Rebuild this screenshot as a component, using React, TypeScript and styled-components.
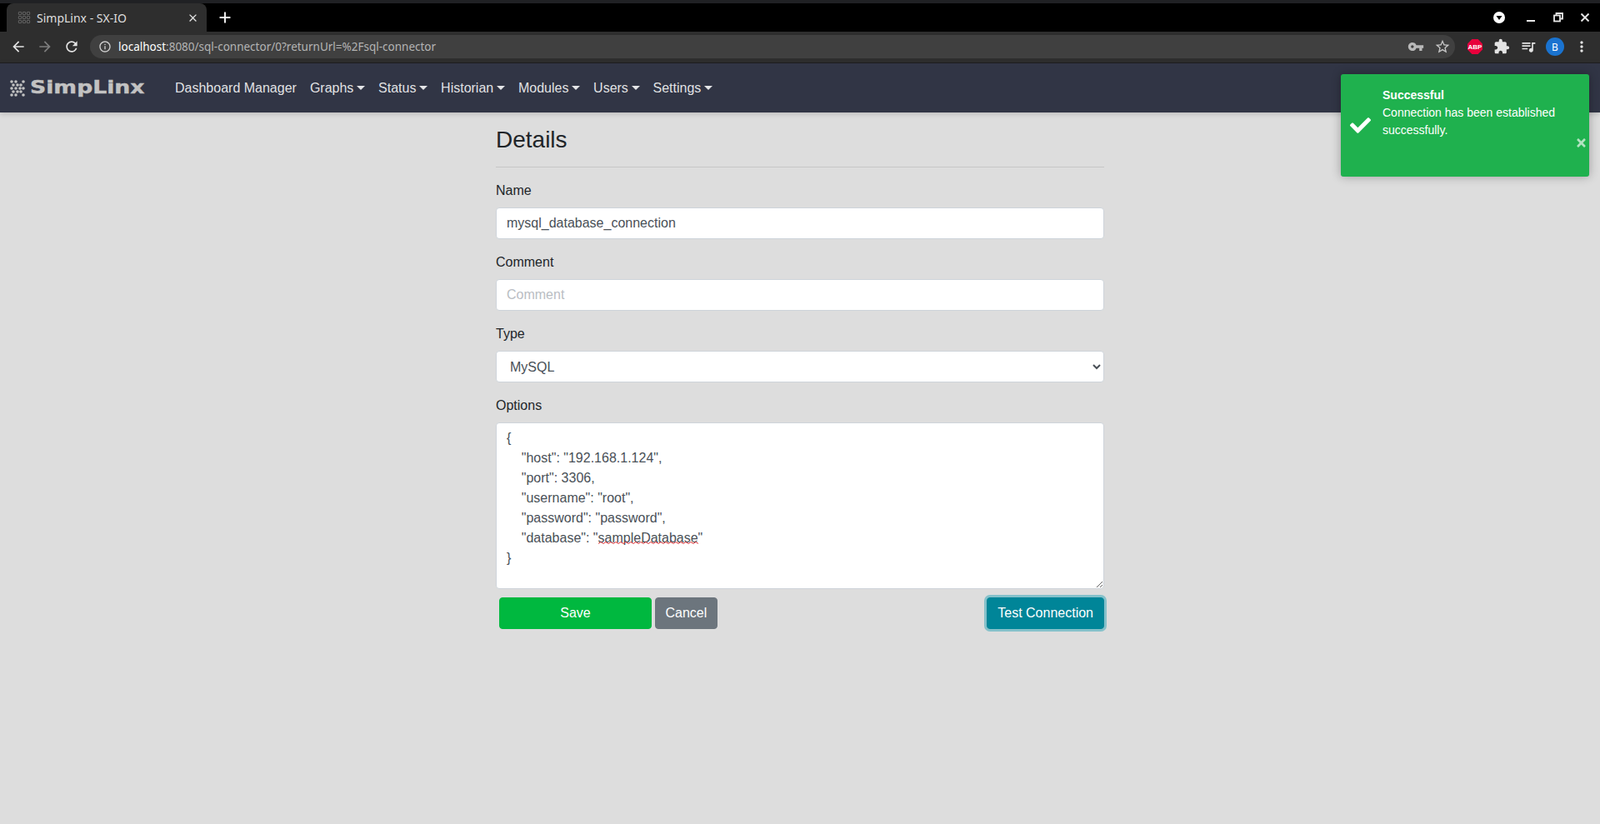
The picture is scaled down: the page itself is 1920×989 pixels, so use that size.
import React from 'react';
import styled, { createGlobalStyle } from 'styled-components';
import { FaCheck, FaTimes } from 'react-icons/fa';
import { MdArrowBack, MdArrowForward, MdRefresh, MdInfoOutline, MdVpnKey, MdStarBorder, MdExtension, MdQueueMusic, MdMoreVert, MdClose, MdAdd } from 'react-icons/md';

const GlobalStyle = createGlobalStyle`
    html, body {
        margin: 0;
        height: 100%;
        overflow: hidden;
        background: #dddddd;
        font-family: "Liberation Sans", Arial, sans-serif;
    }
    * {
        box-sizing: border-box;
    }
`;

const Page = styled.div`
    position: relative;
    height: 989px;
    display: flex;
    flex-direction: column;
    background: #dddddd;
`;

/* browser chrome */
const TabStrip = styled.div`
    height: 38px;
    border-top: 4px solid #202124;
    background: #000000;
    display: flex;
    align-items: flex-end;
    padding-left: 8px;
`;

const Tab = styled.div`
    width: 240px;
    height: 34px;
    background: #2e2e2e;
    border-radius: 8px 8px 0 0;
    display: flex;
    align-items: center;
    padding: 0 9px 0 13px;
    color: #dedede;
    font: 14px "Noto Sans", sans-serif;
`;

const TabTitle = styled.span`
    flex: 1;
    margin-left: 7px;
`;

const NewTab = styled.div`
    width: 44px;
    height: 34px;
    display: flex;
    align-items: center;
    justify-content: center;
    color: #ffffff;
    font-size: 22px;
`;

const WindowControls = styled.div`
    margin-left: auto;
    height: 34px;
    display: flex;
    align-items: center;
    padding-right: 2px;
`;

const WindowButton = styled.div`
    width: 32px;
    height: 34px;
    display: flex;
    align-items: center;
    justify-content: center;
`;

const ProfileMenu = styled(WindowButton)`
    margin-right: 6px;
`;

const MinimizeButton = styled(WindowButton)`
    margin-right: 1px;
`;

const Toolbar = styled.div`
    height: 37px;
    background: #2e2e2e;
    display: flex;
    align-items: center;
    padding: 0 6px 1px;
`;

const ToolButton = styled.div<{ $dim?: boolean }>`
    width: 32px;
    height: 32px;
    flex: none;
    display: flex;
    align-items: center;
    justify-content: center;
    color: ${p => (p.$dim ? '#7d7d7d' : '#e3e3e3')};
    font-size: 20px;
`;

const UrlBar = styled.div`
    flex: 1;
    height: 28px;
    margin: 0 8px 0 6px;
    border-radius: 14px;
    background: #404040;
    display: flex;
    align-items: center;
    padding: 0 0 0 10px;
    font: 13.5px "Noto Sans", sans-serif;
    color: #b4b4b4;
`;

const InfoIcon = styled.span`
    display: flex;
    color: #cfcfcf;
    font-size: 16px;
    margin-right: 8px;
`;

const Host = styled.span`
    color: #ffffff;
`;

const UrlIcons = styled.div`
    margin-left: auto;
    margin-right: -1px;
    display: flex;
    color: #b9b9b9;
    font-size: 20px;
`;

const Abp = styled.div`
    width: 18px;
    height: 18px;
    background: #e8003c;
    clip-path: polygon(30% 0, 70% 0, 100% 30%, 100% 70%, 70% 100%, 30% 100%, 0 70%, 0 30%);
    color: #ffffff;
    font: bold 8px "Liberation Sans", sans-serif;
    display: flex;
    align-items: center;
    justify-content: center;
`;

const Avatar = styled.div`
    width: 22px;
    height: 22px;
    border-radius: 50%;
    background: #1a73d0;
    color: #ffffff;
    font: 12px "Noto Sans", sans-serif;
    display: flex;
    align-items: center;
    justify-content: center;
`;

/* app navbar */
const Navbar = styled.nav`
    height: 60px;
    border-top: 1px solid #1d1d1f;
    background: #313545;
    box-shadow: 0 2px 6px rgba(0, 0, 0, 0.15);
    display: flex;
    align-items: center;
    padding-left: 12px;
`;

const Brand = styled.div`
    width: 190px;
    display: flex;
    align-items: center;
    gap: 5px;
`;

const BrandName = styled.span`
    display: inline-block;
    font: bold 21px "DejaVu Sans", sans-serif;
    color: #c2c2c2;
    line-height: 1;
    -webkit-text-stroke: 0.4px #c2c2c2;
    transform: scaleX(1.27);
    transform-origin: left center;
`;

const NavItem = styled.a<{ $caret?: boolean }>`
    padding: 8px;
    font-size: 16px;
    line-height: 24px;
    color: rgba(255, 255, 255, 0.87);
    white-space: nowrap;

    ${p => p.$caret && `
        &::after {
            content: '';
            display: inline-block;
            margin-left: 3.7px;
            vertical-align: 3px;
            border-top: 5px solid;
            border-right: 5.3px solid transparent;
            border-left: 5.3px solid transparent;
        }
    `}
`;

/* form */
const Main = styled.main`
    width: 730px;
    margin: 0 auto;
    padding-top: 16px;
`;

const Heading = styled.h3`
    margin: 0;
    font-size: 28px;
    font-weight: 500;
    line-height: 34px;
    color: #212529;
`;

const Rule = styled.hr`
    margin: 15px 0 16px;
    border: 0;
    border-top: 1px solid #c6c6c6;
`;

const Field = styled.div`
    margin-bottom: 16px;
`;

const Label = styled.label`
    display: block;
    margin-bottom: 8px;
    font-size: 16px;
    line-height: 24px;
    color: #212529;
`;

const controlStyles = `
    display: block;
    width: 100%;
    border: 1px solid #ced4da;
    border-radius: 4px;
    background: #ffffff;
    font: 16px/24px "Liberation Sans", Arial, sans-serif;
    color: #495057;
    outline: none;
`;

const Input = styled.input`
    ${controlStyles}
    height: 38px;
    padding: 6px 12px;

    &::placeholder {
        color: #b9bdc3;
    }
`;

const Select = styled.select`
    ${controlStyles}
    height: 38px;
    padding: 6px 12px;
`;

const OptionsBox = styled.div`
    position: relative;
`;

const TextArea = styled.textarea`
    ${controlStyles}
    height: 200px;
    padding: 6px 12px;
    white-space: pre;
    vertical-align: top;
`;

const Squiggle = styled.svg`
    position: absolute;
    left: 123px;
    top: 143px;
`;

const Actions = styled.div`
    display: flex;
    align-items: center;
    gap: 4px;
    margin-top: -6px;
    padding-left: 4px;
`;

const Button = styled.button<{ $bg: string; $wide?: boolean }>`
    height: 38px;
    width: ${p => (p.$wide ? '183px' : 'auto')};
    padding: 0 11.5px;
    border: 1px solid ${p => p.$bg};
    border-radius: 4px;
    background: ${p => p.$bg};
    color: #ffffff;
    font: 16px/24px "Liberation Sans", Arial, sans-serif;
`;

const TestButton = styled(Button)`
    margin-left: auto;
    padding: 0 12px;
    box-shadow: 0 0 0 3px rgba(60, 170, 185, 0.55);
`;

/* toast */
const Toast = styled.div`
    position: absolute;
    top: 89px;
    right: 13px;
    width: 298px;
    height: 123px;
    border-radius: 3px;
    background: #1fb14e;
    box-shadow: 0 0 12px rgba(0, 0, 0, 0.3);
    display: flex;
    padding: 15px 0 0 10px;
    color: #ffffff;
    font-size: 14px;
    line-height: 21px;
`;

const ToastIcon = styled.div`
    width: 40px;
    flex: none;
    display: flex;
    align-items: center;
    padding: 0 0 15px 1px;
    font-size: 25px;
`;

const ToastText = styled.div`
    width: 225px;
    flex: none;
`;

const ToastTitle = styled.div`
    font-weight: bold;
`;

const ToastClose = styled.div`
    position: absolute;
    right: 2px;
    top: 75px;
    display: flex;
    font-size: 15px;
    opacity: 0.65;
`;

const navItems = ['Graphs', 'Status', 'Historian', 'Modules', 'Users', 'Settings'];

const optionsText = `{
    "host": "192.168.1.124",
    "port": 3306,
    "username": "root",
    "password": "password",
    "database": "sampleDatabase"
}`;

const wave = Array.from({ length: 41 }, (_, i) => `${i * 3},${i % 2 === 0 ? 2.5 : 0.5}`).join(' ');

const LogoDots = () => {
    // chevrons pointing right, five columns wide
    const dots = [
        [2, 2], [7, 2], [16, 2],
        [4, 6], [9, 6], [13, 6],
        [2, 10], [7, 10], [12, 10], [16, 10],
        [4, 14], [9, 14], [13, 14],
        [2, 18], [7, 18], [16, 18],
    ];
    return (
        <svg width="19" height="20" viewBox="0 0 19 20">
            {dots.map(([cx, cy], i) => (
                <circle key={i} cx={cx} cy={cy} r="1.8" fill="#c2c2c2" />
            ))}
        </svg>
    );
};

const FaviconDots = () => (
    <svg width="16" height="16" viewBox="0 0 16 16">
        {[3, 8, 13].map(x => [3, 8, 13].map(y => (
            <circle key={`${x}-${y}`} cx={x} cy={y} r="1.8" fill="none" stroke="#626262" strokeWidth="1.1" />
        )))}
    </svg>
);

const App = () => {
    return (
        <Page>
            <GlobalStyle />
            <TabStrip>
                <Tab>
                    <FaviconDots />
                    <TabTitle>SimpLinx - SX-IO</TabTitle>
                    <MdClose size={15} color="#e3e3e3" />
                </Tab>
                <NewTab><MdAdd /></NewTab>
                <WindowControls>
                    <ProfileMenu>
                        <svg width="16" height="16" viewBox="0 0 16 16">
                            <circle cx="8" cy="8" r="7" fill="#ffffff" />
                            <path d="M4.5 6h7L8 11z" fill="#000000" />
                        </svg>
                    </ProfileMenu>
                    <MinimizeButton>
                        <svg width="12" height="12" viewBox="0 0 12 12">
                            <path d="M1 10h10" stroke="#e8e8e8" strokeWidth="2" />
                        </svg>
                    </MinimizeButton>
                    <WindowButton>
                        <svg width="12" height="12" viewBox="0 0 12 12" fill="none" stroke="#e8e8e8" strokeWidth="1.8">
                            <path d="M3.5 3V1h7.5v6.5H9" />
                            <rect x="1" y="3.5" width="7" height="7" />
                        </svg>
                    </WindowButton>
                    <WindowButton>
                        <svg width="12" height="12" viewBox="0 0 12 12">
                            <path d="M1.5 1.5l9 9M10.5 1.5l-9 9" stroke="#e8e8e8" strokeWidth="1.8" />
                        </svg>
                    </WindowButton>
                </WindowControls>
            </TabStrip>

            <Toolbar>
                <ToolButton><MdArrowBack /></ToolButton>
                <ToolButton $dim><MdArrowForward /></ToolButton>
                <ToolButton><MdRefresh /></ToolButton>
                <UrlBar>
                    <InfoIcon><MdInfoOutline /></InfoIcon>
                    <Host>localhost</Host>:8080/sql-connector/0?returnUrl=%2Fsql-connector
                    <UrlIcons>
                        <ToolButton $dim><MdVpnKey color="#b9b9b9" /></ToolButton>
                        <ToolButton $dim><MdStarBorder color="#c6c6c6" /></ToolButton>
                    </UrlIcons>
                </UrlBar>
                <ToolButton><Abp>ABP</Abp></ToolButton>
                <ToolButton><MdExtension /></ToolButton>
                <ToolButton><MdQueueMusic /></ToolButton>
                <ToolButton><Avatar>B</Avatar></ToolButton>
                <ToolButton><MdMoreVert /></ToolButton>
            </Toolbar>

            <Navbar>
                <Brand>
                    <LogoDots />
                    <BrandName>SimpLinx</BrandName>
                </Brand>
                <NavItem>Dashboard Manager</NavItem>
                {navItems.map(item => (
                    <NavItem key={item} $caret>{item}</NavItem>
                ))}
            </Navbar>

            <Main>
                <Heading>Details</Heading>
                <Rule />
                <Field>
                    <Label>Name</Label>
                    <Input readOnly value="mysql_database_connection" />
                </Field>
                <Field>
                    <Label>Comment</Label>
                    <Input readOnly placeholder="Comment" />
                </Field>
                <Field>
                    <Label>Type</Label>
                    <Select defaultValue="mysql">
                        <option value="mysql">MySQL</option>
                    </Select>
                </Field>
                <Field>
                    <Label>Options</Label>
                    <OptionsBox>
                        <TextArea readOnly spellCheck={false} defaultValue={optionsText} />
                        <Squiggle width="120" height="3" viewBox="0 0 120 3">
                            <polyline points={wave} fill="none" stroke="#e0383e" strokeWidth="1" />
                        </Squiggle>
                    </OptionsBox>
                </Field>
                <Actions>
                    <Button $bg="#00b83f" $wide>Save</Button>
                    <Button $bg="#6c757d">Cancel</Button>
                    <TestButton $bg="#008598">Test Connection</TestButton>
                </Actions>
            </Main>

            <Toast>
                <ToastIcon><FaCheck /></ToastIcon>
                <ToastText>
                    <ToastTitle>Successful</ToastTitle>
                    Connection has been established successfully.
                </ToastText>
                <ToastClose><FaTimes /></ToastClose>
            </Toast>
        </Page>
    );
};

export default App;
